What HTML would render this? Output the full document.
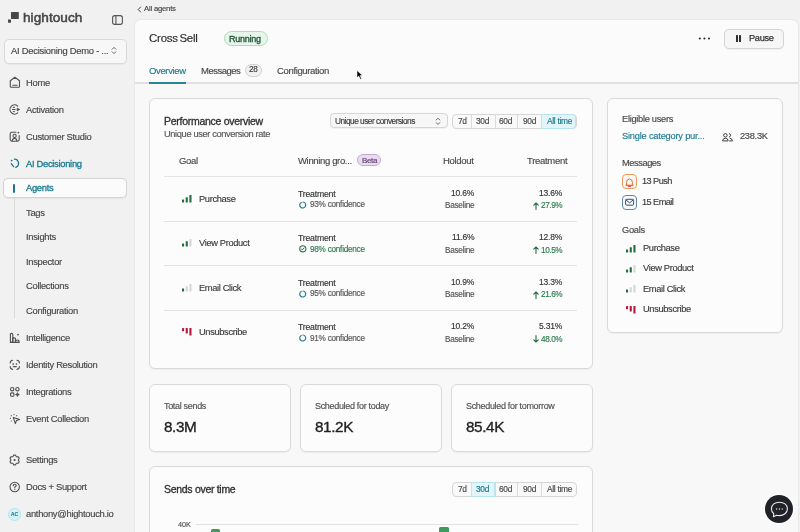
<!DOCTYPE html>
<html><head><meta charset="utf-8">
<style>
*{box-sizing:border-box;margin:0;padding:0}
html,body{width:800px;height:532px;overflow:hidden}
body{background:#f1f1f1;font-family:"Liberation Sans",sans-serif;color:#2b2b2b;position:relative}
.a{position:absolute;white-space:nowrap;line-height:1;-webkit-text-stroke-width:0.15px}
body>div,body>svg{will-change:transform}
svg{position:absolute;overflow:visible}
.panel{position:absolute;left:133.6px;top:19px;width:664.6px;height:520px;background:#fbfbfb;border-radius:7px 7px 0 0;border:1px solid #e9e9e9;border-bottom:none;overflow:hidden}
.content{position:absolute;left:0;top:62.2px;width:664px;height:460px;background:#f8f8f8;border-top:2px solid #e1e1e1}
</style></head>
<body>
<svg style="left:8px;top:12px" width="11" height="11" viewBox="0 0 11 11"><rect x="3" y="0" width="7.8" height="7.1" rx="0.5" fill="#474747"/><rect x="0" y="7.4" width="3" height="3.3" rx="0.4" fill="#474747"/></svg>
<div class="a" style="left:22.80px;top:11.29px;font-size:13.6px;color:#444;letter-spacing:0.05px;font-weight:normal;-webkit-text-stroke-width:0.5px">hightouch</div>
<svg style="left:112px;top:14.5px" width="11" height="10" viewBox="0 0 11 10"><rect x="0.6" y="0.6" width="9.8" height="8.8" rx="2.2" fill="none" stroke="#555" stroke-width="1.1"/><line x1="3.9" y1="1" x2="3.9" y2="9" stroke="#555" stroke-width="1.1"/></svg>
<div class="a" style="left:3.5px;top:38.5px;width:123px;height:24.5px;border:1px solid #d9d9d9;border-radius:5px;background:#f7f7f7;box-shadow:0 0.5px 1px rgba(0,0,0,0.04)"></div>
<div class="a" style="left:11.00px;top:46.24px;font-size:9.4px;color:#454545;letter-spacing:-0.25px;font-weight:normal;">AI Decisioning Demo - ...</div>
<svg style="left:111px;top:46px" width="6" height="9" viewBox="0 0 6 9"><path d="M1.2 3.2 L3 1.4 L4.8 3.2 M1.2 5.8 L3 7.6 L4.8 5.8" fill="none" stroke="#555" stroke-width="0.9" stroke-linecap="round" stroke-linejoin="round"/></svg>
<div class="a" style="left:26.00px;top:78.14px;font-size:9.4px;color:#474747;letter-spacing:-0.3px;font-weight:normal;">Home</div>
<div class="a" style="left:26.00px;top:104.94px;font-size:9.4px;color:#474747;letter-spacing:-0.3px;font-weight:normal;">Activation</div>
<div class="a" style="left:26.00px;top:131.94px;font-size:9.4px;color:#474747;letter-spacing:-0.3px;font-weight:normal;">Customer Studio</div>
<div class="a" style="left:26.00px;top:333.24px;font-size:9.4px;color:#474747;letter-spacing:-0.3px;font-weight:normal;">Intelligence</div>
<div class="a" style="left:26.00px;top:360.14px;font-size:9.4px;color:#474747;letter-spacing:-0.3px;font-weight:normal;">Identity Resolution</div>
<div class="a" style="left:26.00px;top:387.04px;font-size:9.4px;color:#474747;letter-spacing:-0.3px;font-weight:normal;">Integrations</div>
<div class="a" style="left:26.00px;top:413.74px;font-size:9.4px;color:#474747;letter-spacing:-0.3px;font-weight:normal;">Event Collection</div>
<div class="a" style="left:26.00px;top:455.44px;font-size:9.4px;color:#474747;letter-spacing:-0.3px;font-weight:normal;">Settings</div>
<div class="a" style="left:26.00px;top:482.14px;font-size:9.4px;color:#474747;letter-spacing:-0.3px;font-weight:normal;">Docs + Support</div>
<div class="a" style="left:26.00px;top:508.94px;font-size:9.4px;color:#474747;letter-spacing:-0.3px;font-weight:normal;">anthony@hightouch.io</div>
<div class="a" style="left:26.00px;top:158.94px;font-size:9.4px;color:#187a8f;letter-spacing:-0.3px;font-weight:normal;-webkit-text-stroke-width:0.3px">AI Decisioning</div>
<div class="a" style="left:3.2px;top:178.1px;width:124px;height:19.6px;border:1px solid #d4d4d4;border-radius:5px;background:#fbfbfb;box-shadow:0 0.5px 1px rgba(0,0,0,0.05)"></div>
<div class="a" style="left:13px;top:184px;width:1.8px;height:9px;background:#1e7386;border-radius:1px"></div>
<div class="a" style="left:26.00px;top:183.14px;font-size:9.4px;color:#187a8f;letter-spacing:-0.3px;font-weight:normal;-webkit-text-stroke-width:0.3px">Agents</div>
<div class="a" style="left:13.6px;top:198px;width:1px;height:120px;background:#d9d9d9"></div>
<div class="a" style="left:26.00px;top:208.14px;font-size:9.4px;color:#474747;letter-spacing:-0.3px;font-weight:normal;">Tags</div>
<div class="a" style="left:26.00px;top:232.34px;font-size:9.4px;color:#474747;letter-spacing:-0.3px;font-weight:normal;">Insights</div>
<div class="a" style="left:26.00px;top:256.84px;font-size:9.4px;color:#474747;letter-spacing:-0.3px;font-weight:normal;">Inspector</div>
<div class="a" style="left:26.00px;top:281.34px;font-size:9.4px;color:#474747;letter-spacing:-0.3px;font-weight:normal;">Collections</div>
<div class="a" style="left:26.00px;top:305.84px;font-size:9.4px;color:#474747;letter-spacing:-0.3px;font-weight:normal;">Configuration</div>
<svg style="left:9px;top:76px" width="12" height="12" viewBox="0 0 12 12"><path d="M1.3 4.8 L5.9 1.2 L10.5 4.8 L10.5 10.4 Q10.5 11.2 9.7 11.2 L2.1 11.2 Q1.3 11.2 1.3 10.4 Z" fill="none" stroke="#505050" stroke-width="1.1" stroke-linecap="round" stroke-linejoin="round"/><path d="M3.8 9.2 L8 9.2" fill="none" stroke="#505050" stroke-width="1.1" stroke-linecap="round" stroke-linejoin="round"/></svg>
<svg style="left:9px;top:104px" width="12" height="12" viewBox="0 0 12 12"><path d="M8.7 2.1 A4.6 4.6 0 1 0 8.7 8.9" fill="none" stroke="#505050" stroke-width="1.1" stroke-linecap="round" stroke-linejoin="round"/><path d="M4.3 3.4 L5.5 3.4 M3.4 5.5 L6.2 5.5 M4.3 7.6 L5.5 7.6" fill="none" stroke="#505050" stroke-width="1" stroke-linecap="round"/><path d="M8.2 4.2 L10.6 5.5 L8.2 6.8 Z" fill="#505050" stroke="#505050" stroke-width="0.9" stroke-linejoin="round"/></svg>
<svg style="left:9px;top:131px" width="12" height="12" viewBox="0 0 12 12"><path d="M7 1.2 L2.8 1.2 Q1.2 1.2 1.2 2.8 L1.2 8.6 Q1.2 10.2 2.8 10.2 L8.6 10.2 Q10.2 10.2 10.2 8.6 L10.2 4.6" fill="none" stroke="#505050" stroke-width="1.1" stroke-linecap="round" stroke-linejoin="round"/><circle cx="5.6" cy="4.9" r="1.6" fill="none" stroke="#505050" stroke-width="1.1" stroke-linecap="round" stroke-linejoin="round"/><path d="M3.2 10 Q3.6 7.4 5.6 7.4 Q7.6 7.4 8 10" fill="none" stroke="#505050" stroke-width="1.1" stroke-linecap="round" stroke-linejoin="round"/><circle cx="9.4" cy="1.6" r="0.9" fill="#505050"/></svg>
<svg style="left:9px;top:157px" width="12" height="12" viewBox="0 0 12 12"><circle cx="2.6" cy="3.6" r="0.9" fill="#1e7386"/><path d="M5.4 2.1 A4.3 4.3 0 0 1 6.8 10.4" fill="none" stroke="#1e7386" stroke-width="1.3" stroke-linecap="round"/><path d="M2.3 6.6 L4.6 9.6" fill="none" stroke="#1e7386" stroke-width="1.3" stroke-linecap="round"/></svg>
<svg style="left:9px;top:332px" width="12" height="12" viewBox="0 0 12 12"><path d="M1.4 10.4 L1.4 2.6 Q1.4 1.4 2.6 1.4 Q3.8 1.4 3.8 2.6 L3.8 10.4 Z" fill="none" stroke="#505050" stroke-width="1.1" stroke-linecap="round" stroke-linejoin="round"/><path d="M3.8 10.4 L3.8 5.6 Q6.4 5.6 6.4 6.8 L6.4 10.4" fill="none" stroke="#505050" stroke-width="1.1" stroke-linecap="round" stroke-linejoin="round"/><path d="M6.4 10.4 L10 10.4 Q10.4 8 8.6 8 Q7.2 8 6.4 8.8" fill="none" stroke="#505050" stroke-width="1.1" stroke-linecap="round" stroke-linejoin="round"/><path d="M1.4 10.4 L10 10.4" fill="none" stroke="#505050" stroke-width="1.1" stroke-linecap="round" stroke-linejoin="round"/><circle cx="9" cy="2.6" r="0.9" fill="#505050"/></svg>
<svg style="left:9px;top:359px" width="12" height="12" viewBox="0 0 12 12"><path d="M1.2 4 Q1.2 1.4 3.6 1.2 M8 1.2 Q10.4 1.4 10.4 4 M10.4 7.6 Q10.4 10.2 8 10.4 M3.6 10.4 Q1.2 10.2 1.2 7.6" fill="none" stroke="#505050" stroke-width="1.1" stroke-linecap="round" stroke-linejoin="round"/><circle cx="4.2" cy="5" r="0.55" fill="#505050" stroke="#505050" stroke-width="0.6"/><circle cx="7.4" cy="5" r="0.55" fill="#505050" stroke="#505050" stroke-width="0.6"/><path d="M4.3 7.6 L7.3 7.6" fill="none" stroke="#505050" stroke-width="1.1" stroke-linecap="round" stroke-linejoin="round"/></svg>
<svg style="left:9px;top:386px" width="12" height="12" viewBox="0 0 12 12"><circle cx="3.2" cy="3.2" r="1.7" fill="none" stroke="#505050" stroke-width="1.1" stroke-linecap="round" stroke-linejoin="round"/><circle cx="8.4" cy="3.2" r="1.7" fill="none" stroke="#505050" stroke-width="1.1" stroke-linecap="round" stroke-linejoin="round"/><rect x="1.5" y="6.9" width="3.4" height="3.4" rx="1" fill="none" stroke="#505050" stroke-width="1.1" stroke-linecap="round" stroke-linejoin="round"/><path d="M8.4 6.5 Q8.8 8.2 10.5 8.6 Q8.8 9 8.4 10.7 Q8 9 6.3 8.6 Q8 8.2 8.4 6.5 Z" fill="#505050" stroke="#505050" stroke-width="0.5" stroke-linejoin="round"/></svg>
<svg style="left:9px;top:413px" width="12" height="12" viewBox="0 0 12 12"><circle cx="5" cy="1.6" r="0.6" fill="#505050"/><circle cx="2.3" cy="2.7" r="0.6" fill="#505050"/><circle cx="7.7" cy="2.7" r="0.6" fill="#505050"/><circle cx="1.4" cy="5.3" r="0.6" fill="#505050"/><circle cx="2.3" cy="8" r="0.6" fill="#505050"/><path d="M4.3 4.6 L10.6 6.6 L7.4 7.6 L6.4 10.6 Z" fill="none" stroke="#505050" stroke-width="1.1" stroke-linecap="round" stroke-linejoin="round"/></svg>
<svg style="left:9px;top:454px" width="12" height="12" viewBox="0 0 12 12"><path d="M3.75 2.80 L4.75 1.17 L6.45 1.17 L7.45 2.80 L9.35 2.85 L10.20 4.32 L9.30 6.00 L10.20 7.68 L9.35 9.15 L7.45 9.20 L6.45 10.83 L4.75 10.83 L3.75 9.20 L1.85 9.15 L1.00 7.68 L1.90 6.00 L1.00 4.32 L1.85 2.85 Z" fill="none" stroke="#505050" stroke-width="1.1" stroke-linecap="round" stroke-linejoin="round"/><circle cx="5.6" cy="6" r="1.1" fill="#505050"/></svg>
<svg style="left:9px;top:481px" width="12" height="12" viewBox="0 0 12 12"><circle cx="5.7" cy="6" r="4.7" fill="none" stroke="#505050" stroke-width="1.1" stroke-linecap="round" stroke-linejoin="round"/><path d="M4.2 4.7 Q4.2 3.2 5.7 3.2 Q7.2 3.2 7.2 4.6 Q7.2 5.6 5.8 6.1 L5.8 7" fill="none" stroke="#505050" stroke-width="1.1" stroke-linecap="round" stroke-linejoin="round"/><circle cx="5.8" cy="8.6" r="0.6" fill="#505050"/></svg>
<div class="a" style="left:7.9px;top:507.9px;width:12.8px;height:12.8px;border-radius:50%;background:#d5f2f9;border:0.8px solid #b3e3ee;display:flex;align-items:center;justify-content:center;font-size:5.4px;font-weight:bold;color:#1e6f80;letter-spacing:-0.2px;-webkit-text-stroke-width:0;line-height:1;padding-top:0.4px">AC</div>
<svg style="left:137px;top:5.5px" width="5" height="7" viewBox="0 0 5 7"><path d="M3.6 1 L1.2 3.5 L3.6 6" fill="none" stroke="#444" stroke-width="1" stroke-linecap="round" stroke-linejoin="round"/></svg>
<div class="a" style="left:144.10px;top:5.48px;font-size:7.7px;color:#444;letter-spacing:-0.2px;font-weight:normal;">All agents</div>
<div class="panel"><div class="content"></div></div>
<div class="a" style="left:149.00px;top:32.87px;font-size:11.5px;color:#2b2b2b;letter-spacing:-0.25px;font-weight:normal;word-spacing:-1.3px">Cross Sell</div>
<div class="a" style="left:224px;top:31.2px;width:44px;height:14.6px;border:1px solid #a9dcb8;border-radius:8px;background:#e7f5eb"></div>
<div class="a" style="left:228.50px;top:34.68px;font-size:9px;color:#1f5134;letter-spacing:-0.25px;font-weight:normal;-webkit-text-stroke:0.3px #1f5134">Running</div>
<svg style="left:698px;top:37px" width="13" height="3" viewBox="0 0 13 3"><circle cx="1.8" cy="1.5" r="1" fill="#222"/><circle cx="6.4" cy="1.5" r="1" fill="#222"/><circle cx="11" cy="1.5" r="1" fill="#222"/></svg>
<div class="a" style="left:724px;top:28.7px;width:60px;height:19.8px;border:1px solid #d4d4d4;border-radius:5px;background:#f6f6f6;box-shadow:0 0.5px 1px rgba(0,0,0,0.05)"></div>
<div class="a" style="left:735.5px;top:35px;width:1.7px;height:7.1px;background:#2e2e2e;border-radius:0.6px"></div>
<div class="a" style="left:739.4px;top:35px;width:1.7px;height:7.1px;background:#2e2e2e;border-radius:0.6px"></div>
<div class="a" style="left:749.30px;top:34.31px;font-size:9.2px;color:#333;letter-spacing:-0.3px;font-weight:normal;-webkit-text-stroke:0.25px #333">Pause</div>
<div class="a" style="left:148.80px;top:65.96px;font-size:9.5px;color:#187a8f;letter-spacing:-0.35px;font-weight:normal;">Overview</div>
<div class="a" style="left:149px;top:82px;width:37px;height:1.6px;background:#2a8599"></div>
<div class="a" style="left:201.00px;top:65.96px;font-size:9.5px;color:#474747;letter-spacing:-0.5px;font-weight:normal;">Messages</div>
<div class="a" style="left:245px;top:64px;width:17px;height:12.6px;border:1px solid #cfcfcf;border-radius:7px;background:#f1f1f1"></div>
<div class="a" style="left:249.00px;top:66.26px;font-size:8.2px;color:#3a3a3a;letter-spacing:-0.3px;font-weight:normal;">28</div>
<div class="a" style="left:277.00px;top:65.96px;font-size:9.5px;color:#474747;letter-spacing:-0.35px;font-weight:normal;">Configuration</div>
<div class="a" style="left:149px;top:98.4px;width:443.6px;height:270.6px;background:#fcfcfc;border:1px solid #d9d9d9;border-radius:6px;box-shadow:0 1px 1px rgba(0,0,0,0.05)"></div>
<div class="a" style="left:607.2px;top:98.4px;width:176.3px;height:234.8px;background:#fcfcfc;border:1px solid #d9d9d9;border-radius:6px;box-shadow:0 1px 1px rgba(0,0,0,0.05)"></div>
<div class="a" style="left:149px;top:384px;width:141.5px;height:67.5px;background:#fcfcfc;border:1px solid #d9d9d9;border-radius:6px;box-shadow:0 1px 1px rgba(0,0,0,0.05)"></div>
<div class="a" style="left:300px;top:384px;width:141.5px;height:67.5px;background:#fcfcfc;border:1px solid #d9d9d9;border-radius:6px;box-shadow:0 1px 1px rgba(0,0,0,0.05)"></div>
<div class="a" style="left:451.3px;top:384px;width:141.5px;height:67.5px;background:#fcfcfc;border:1px solid #d9d9d9;border-radius:6px;box-shadow:0 1px 1px rgba(0,0,0,0.05)"></div>
<div class="a" style="left:149px;top:466.4px;width:444px;height:80px;background:#fcfcfc;border:1px solid #d9d9d9;border-radius:6px;box-shadow:0 1px 1px rgba(0,0,0,0.05)"></div>
<div class="a" style="left:164.20px;top:116.11px;font-size:10.5px;color:#2e2e2e;letter-spacing:-0.28px;font-weight:normal;-webkit-text-stroke:0.3px #2e2e2e">Performance overview</div>
<div class="a" style="left:164.40px;top:129.53px;font-size:9.3px;color:#555;letter-spacing:-0.38px;font-weight:normal;">Unique user conversion rate</div>
<div class="a" style="left:329.6px;top:113.4px;width:117.6px;height:14.8px;border:1px solid #d6d6d6;border-radius:4px;background:#f7f7f7;box-shadow:0 0.5px 1px rgba(0,0,0,0.05)"></div>
<div class="a" style="left:334.60px;top:116.97px;font-size:8.3px;color:#383838;letter-spacing:-0.5px;font-weight:normal;">Unique user conversions</div>
<svg style="left:434.5px;top:116.5px" width="6" height="9" viewBox="0 0 6 9"><path d="M1.2 3 L3 1.2 L4.8 3 M1.2 5.6 L3 7.4 L4.8 5.6" fill="none" stroke="#555" stroke-width="0.9" stroke-linecap="round" stroke-linejoin="round"/></svg>
<div class="a" style="left:452px;top:113.6px;width:124.6px;height:14.5px;border:1px solid #d6d6d6;border-radius:4px;background:#f9f9f9"></div>
<div class="a" style="left:541.25px;top:113.6px;width:35.35000000000002px;height:14.5px;background:#e2f5fa;border:1px solid #b7e3ee;border-radius:0 4px 4px 0"></div>
<div class="a" style="left:470.7px;top:114.1px;width:1px;height:13.5px;background:#dadada"></div>
<div class="a" style="left:494.5px;top:114.1px;width:1px;height:13.5px;background:#dadada"></div>
<div class="a" style="left:517.3px;top:114.1px;width:1px;height:13.5px;background:#dadada"></div>
<div class="a" style="left:541.25px;top:114.1px;width:1px;height:13.5px;background:#dadada"></div>
<div class="a" style="left:457.60px;top:116.89px;font-size:8.4px;color:#474747;letter-spacing:-0.3px;font-weight:normal;">7d</div>
<div class="a" style="left:476.00px;top:116.89px;font-size:8.4px;color:#474747;letter-spacing:-0.3px;font-weight:normal;">30d</div>
<div class="a" style="left:499.25px;top:116.89px;font-size:8.4px;color:#474747;letter-spacing:-0.3px;font-weight:normal;">60d</div>
<div class="a" style="left:522.90px;top:116.89px;font-size:8.4px;color:#474747;letter-spacing:-0.3px;font-weight:normal;">90d</div>
<div class="a" style="left:547.40px;top:116.89px;font-size:8.4px;color:#1e7386;letter-spacing:-0.3px;font-weight:normal;">All time</div>
<div class="a" style="left:179.00px;top:156.16px;font-size:9.5px;color:#474747;letter-spacing:-0.3px;font-weight:normal;">Goal</div>
<div class="a" style="left:298.00px;top:156.36px;font-size:9.5px;color:#474747;letter-spacing:-0.35px;font-weight:normal;">Winning gro...</div>
<div class="a" style="left:357.4px;top:154.4px;width:24.2px;height:12px;border:1px solid #caa6d8;border-radius:7px;background:#eadcf0"></div>
<div class="a" style="left:362.40px;top:156.83px;font-size:8px;color:#5a3a6a;letter-spacing:-0.35px;font-weight:normal;">Beta</div>
<div class="a" style="right:326.00px;top:156.16px;font-size:9.5px;color:#474747;letter-spacing:-0.3px;font-weight:normal;">Holdout</div>
<div class="a" style="right:233.00px;top:156.16px;font-size:9.5px;color:#474747;letter-spacing:-0.3px;font-weight:normal;">Treatment</div>
<div class="a" style="left:164.4px;top:176.4px;width:412.6px;height:1.2px;background:#e4e4e4"></div>
<svg style="left:182.2px;top:194.9px" width="10" height="8" viewBox="0 0 10 8"><rect x="0.0" y="4.3999999999999995" width="2.1" height="3.2" rx="0.4" fill="#1f6e3e"/><rect x="3.7" y="2.1999999999999993" width="2.1" height="5.4" rx="0.4" fill="#1f6e3e"/><rect x="7.4" y="0.0" width="2.1" height="7.6" rx="0.4" fill="#1f6e3e"/></svg>
<div class="a" style="left:198.80px;top:194.73px;font-size:9.3px;color:#3a3a3a;letter-spacing:-0.35px;font-weight:normal;">Purchase</div>
<div class="a" style="left:298.30px;top:189.84px;font-size:8.7px;color:#333;letter-spacing:-0.2px;font-weight:normal;">Treatment</div>
<svg style="left:298.5px;top:200.8px" width="8" height="8" viewBox="0 0 8 8"><path d="M2.2 1.4 A3 3 0 1 0 4 1" fill="none" stroke="#2b7f93" stroke-width="1.2" stroke-linecap="round"/></svg>
<div class="a" style="left:310.00px;top:201.26px;font-size:8.2px;color:#555;letter-spacing:-0.25px;font-weight:normal;">93% confidence</div>
<div class="a" style="right:326.00px;top:189.00px;font-size:8.5px;color:#333;letter-spacing:-0.2px;font-weight:normal;">10.6%</div>
<div class="a" style="right:326.00px;top:202.26px;font-size:8.2px;color:#555;letter-spacing:-0.25px;font-weight:normal;">Baseline</div>
<div class="a" style="right:238.00px;top:189.00px;font-size:8.5px;color:#333;letter-spacing:-0.2px;font-weight:normal;">13.6%</div>
<div class="a" style="right:237.80px;top:202.26px;font-size:8.2px;color:#2a7a4a;letter-spacing:-0.4px;font-weight:normal;">27.9%</div>
<svg style="left:532.5px;top:202.0px" width="6" height="8" viewBox="0 0 6 8"><path d="M3 7.4 L3 1 M0.8 3.2 L3 1 L5.2 3.2" fill="none" stroke="#1f6e3e" stroke-width="1.1" stroke-linecap="round" stroke-linejoin="round"/></svg>
<div class="a" style="left:164.4px;top:220.85000000000002px;width:412.6px;height:1.2px;background:#e4e4e4"></div>
<svg style="left:182.2px;top:239.35px" width="10" height="8" viewBox="0 0 10 8"><rect x="0.0" y="4.3999999999999995" width="2.1" height="3.2" rx="0.4" fill="#1f6e3e"/><rect x="3.7" y="2.1999999999999993" width="2.1" height="5.4" rx="0.4" fill="#1f6e3e"/><rect x="7.4" y="0.0" width="2.1" height="7.6" rx="0.4" fill="#d5d5d5"/></svg>
<div class="a" style="left:198.80px;top:239.18px;font-size:9.3px;color:#3a3a3a;letter-spacing:-0.35px;font-weight:normal;">View Product</div>
<div class="a" style="left:298.30px;top:234.29px;font-size:8.7px;color:#333;letter-spacing:-0.2px;font-weight:normal;">Treatment</div>
<svg style="left:298.5px;top:245.25px" width="8" height="8" viewBox="0 0 8 8"><circle cx="3.8" cy="3.8" r="3.1" fill="none" stroke="#2a7a4a" stroke-width="1.1"/><path d="M2.4 3.9 L3.4 4.9 L5.2 2.9" fill="none" stroke="#2a7a4a" stroke-width="1" stroke-linecap="round" stroke-linejoin="round"/></svg>
<div class="a" style="left:310.00px;top:245.71px;font-size:8.2px;color:#2a7a4a;letter-spacing:-0.25px;font-weight:normal;">98% confidence</div>
<div class="a" style="right:326.00px;top:233.45px;font-size:8.5px;color:#333;letter-spacing:-0.2px;font-weight:normal;">11.6%</div>
<div class="a" style="right:326.00px;top:246.71px;font-size:8.2px;color:#555;letter-spacing:-0.25px;font-weight:normal;">Baseline</div>
<div class="a" style="right:238.00px;top:233.45px;font-size:8.5px;color:#333;letter-spacing:-0.2px;font-weight:normal;">12.8%</div>
<div class="a" style="right:237.80px;top:246.71px;font-size:8.2px;color:#2a7a4a;letter-spacing:-0.4px;font-weight:normal;">10.5%</div>
<svg style="left:532.5px;top:246.45px" width="6" height="8" viewBox="0 0 6 8"><path d="M3 7.4 L3 1 M0.8 3.2 L3 1 L5.2 3.2" fill="none" stroke="#1f6e3e" stroke-width="1.1" stroke-linecap="round" stroke-linejoin="round"/></svg>
<div class="a" style="left:164.4px;top:265.3px;width:412.6px;height:1.2px;background:#e4e4e4"></div>
<svg style="left:182.2px;top:283.79999999999995px" width="10" height="8" viewBox="0 0 10 8"><rect x="0.0" y="4.3999999999999995" width="2.1" height="3.2" rx="0.4" fill="#1f6e3e"/><rect x="3.7" y="2.1999999999999993" width="2.1" height="5.4" rx="0.4" fill="#d5d5d5"/><rect x="7.4" y="0.0" width="2.1" height="7.6" rx="0.4" fill="#d5d5d5"/></svg>
<div class="a" style="left:198.80px;top:283.63px;font-size:9.3px;color:#3a3a3a;letter-spacing:-0.35px;font-weight:normal;">Email Click</div>
<div class="a" style="left:298.30px;top:278.74px;font-size:8.7px;color:#333;letter-spacing:-0.2px;font-weight:normal;">Treatment</div>
<svg style="left:298.5px;top:289.70000000000005px" width="8" height="8" viewBox="0 0 8 8"><path d="M2.2 1.4 A3 3 0 1 0 4 1" fill="none" stroke="#2b7f93" stroke-width="1.2" stroke-linecap="round"/></svg>
<div class="a" style="left:310.00px;top:290.16px;font-size:8.2px;color:#555;letter-spacing:-0.25px;font-weight:normal;">95% confidence</div>
<div class="a" style="right:326.00px;top:277.90px;font-size:8.5px;color:#333;letter-spacing:-0.2px;font-weight:normal;">10.9%</div>
<div class="a" style="right:326.00px;top:291.16px;font-size:8.2px;color:#555;letter-spacing:-0.25px;font-weight:normal;">Baseline</div>
<div class="a" style="right:238.00px;top:277.90px;font-size:8.5px;color:#333;letter-spacing:-0.2px;font-weight:normal;">13.3%</div>
<div class="a" style="right:237.80px;top:291.16px;font-size:8.2px;color:#2a7a4a;letter-spacing:-0.4px;font-weight:normal;">21.6%</div>
<svg style="left:532.5px;top:290.9px" width="6" height="8" viewBox="0 0 6 8"><path d="M3 7.4 L3 1 M0.8 3.2 L3 1 L5.2 3.2" fill="none" stroke="#1f6e3e" stroke-width="1.1" stroke-linecap="round" stroke-linejoin="round"/></svg>
<div class="a" style="left:164.4px;top:309.75px;width:412.6px;height:1.2px;background:#e4e4e4"></div>
<svg style="left:182px;top:327.7px" width="10" height="8" viewBox="0 0 10 8"><rect x="0.0" y="0" width="2.1" height="3.2" rx="0.4" fill="#b3173d"/><rect x="3.7" y="0" width="2.1" height="5.4" rx="0.4" fill="#b3173d"/><rect x="7.4" y="0" width="2.1" height="7.6" rx="0.4" fill="#b3173d"/></svg>
<div class="a" style="left:198.80px;top:328.08px;font-size:9.3px;color:#3a3a3a;letter-spacing:-0.35px;font-weight:normal;">Unsubscribe</div>
<div class="a" style="left:298.30px;top:323.19px;font-size:8.7px;color:#333;letter-spacing:-0.2px;font-weight:normal;">Treatment</div>
<svg style="left:298.5px;top:334.15000000000003px" width="8" height="8" viewBox="0 0 8 8"><path d="M2.2 1.4 A3 3 0 1 0 4 1" fill="none" stroke="#2b7f93" stroke-width="1.2" stroke-linecap="round"/></svg>
<div class="a" style="left:310.00px;top:334.61px;font-size:8.2px;color:#555;letter-spacing:-0.25px;font-weight:normal;">91% confidence</div>
<div class="a" style="right:326.00px;top:322.35px;font-size:8.5px;color:#333;letter-spacing:-0.2px;font-weight:normal;">10.2%</div>
<div class="a" style="right:326.00px;top:335.61px;font-size:8.2px;color:#555;letter-spacing:-0.25px;font-weight:normal;">Baseline</div>
<div class="a" style="right:238.00px;top:322.35px;font-size:8.5px;color:#333;letter-spacing:-0.2px;font-weight:normal;">5.31%</div>
<div class="a" style="right:237.80px;top:335.61px;font-size:8.2px;color:#2a7a4a;letter-spacing:-0.4px;font-weight:normal;">48.0%</div>
<svg style="left:532.5px;top:335.35px" width="6" height="8" viewBox="0 0 6 8"><path d="M3 0.6 L3 7 M0.8 4.8 L3 7 L5.2 4.8" fill="none" stroke="#1f6e3e" stroke-width="1.1" stroke-linecap="round" stroke-linejoin="round"/></svg>
<div class="a" style="left:621.60px;top:114.93px;font-size:9.3px;color:#474747;letter-spacing:-0.3px;font-weight:normal;">Eligible users</div>
<div class="a" style="left:621.60px;top:131.73px;font-size:9.3px;color:#1f7a90;letter-spacing:-0.22px;font-weight:normal;">Single category pur...</div>
<svg style="left:722px;top:132.5px" width="12" height="9" viewBox="0 0 12 9"><circle cx="3.4" cy="2.3" r="1.75" fill="none" stroke="#3d3d3d" stroke-width="1"/><path d="M0.6 7.9 Q0.8 5.2 3.4 5.2 Q6 5.2 6.2 7.9 Z" fill="none" stroke="#3d3d3d" stroke-width="1" stroke-linejoin="round"/><path d="M7.3 0.6 A1.75 1.75 0 0 1 7.3 4" fill="none" stroke="#3d3d3d" stroke-width="1" stroke-linecap="round"/><path d="M8.1 5.3 Q10.3 5.6 10.4 7.9 L7.6 7.9" fill="none" stroke="#3d3d3d" stroke-width="1" stroke-linecap="round" stroke-linejoin="round"/></svg>
<div class="a" style="right:32.10px;top:131.53px;font-size:9.3px;color:#474747;letter-spacing:-0.3px;font-weight:normal;">238.3K</div>
<div class="a" style="left:621.60px;top:159.13px;font-size:9.3px;color:#474747;letter-spacing:-0.45px;font-weight:normal;">Messages</div>
<div class="a" style="left:622.2px;top:174.3px;width:14.8px;height:15px;border:1px solid #e59a5e;border-radius:4px;background:#fdf6f1"></div>
<svg style="left:624px;top:176.5px" width="11" height="11" viewBox="0 0 11 11"><path d="M2.6 8.2 L2.6 5.4 Q2.6 2 5.5 2 Q8.4 2 8.4 5.4 L8.4 8.2 Z M1.8 8.2 L9.2 8.2" fill="none" stroke="#dd6f3a" stroke-width="1" stroke-linejoin="round" stroke-linecap="round"/><path d="M4.5 9.4 L6.5 9.4" fill="none" stroke="#c8403a" stroke-width="1" stroke-linecap="round"/></svg>
<div class="a" style="left:641.80px;top:177.41px;font-size:9.2px;color:#3a3a3a;letter-spacing:-0.55px;font-weight:normal;">13 Push</div>
<div class="a" style="left:622.2px;top:194.5px;width:14.8px;height:15px;border:1px solid #6585a6;border-radius:4px;background:#f6f8fb"></div>
<svg style="left:624px;top:196.5px" width="11" height="11" viewBox="0 0 11 11"><rect x="1.6" y="2.3" width="8" height="5.9" rx="1.1" fill="none" stroke="#34506e" stroke-width="1"/><path d="M2 3 L5.6 5.8 L9.2 3" fill="none" stroke="#34506e" stroke-width="1" stroke-linejoin="round" stroke-linecap="round"/></svg>
<div class="a" style="left:641.80px;top:197.51px;font-size:9.2px;color:#3a3a3a;letter-spacing:-0.55px;font-weight:normal;">15 Email</div>
<div class="a" style="left:621.80px;top:225.93px;font-size:9.3px;color:#474747;letter-spacing:-0.3px;font-weight:normal;">Goals</div>
<svg style="left:625.75px;top:244.6px" width="10" height="8" viewBox="0 0 10 8"><rect x="0.0" y="4.3999999999999995" width="2.1" height="3.2" rx="0.4" fill="#1f6e3e"/><rect x="3.7" y="2.1999999999999993" width="2.1" height="5.4" rx="0.4" fill="#1f6e3e"/><rect x="7.4" y="0.0" width="2.1" height="7.6" rx="0.4" fill="#1f6e3e"/></svg>
<div class="a" style="left:642.60px;top:243.93px;font-size:9.3px;color:#3a3a3a;letter-spacing:-0.35px;font-weight:normal;">Purchase</div>
<svg style="left:625.75px;top:264.9px" width="10" height="8" viewBox="0 0 10 8"><rect x="0.0" y="4.3999999999999995" width="2.1" height="3.2" rx="0.4" fill="#1f6e3e"/><rect x="3.7" y="2.1999999999999993" width="2.1" height="5.4" rx="0.4" fill="#1f6e3e"/><rect x="7.4" y="0.0" width="2.1" height="7.6" rx="0.4" fill="#d5d5d5"/></svg>
<div class="a" style="left:642.60px;top:264.23px;font-size:9.3px;color:#3a3a3a;letter-spacing:-0.35px;font-weight:normal;">View Product</div>
<svg style="left:625.75px;top:285.2px" width="10" height="8" viewBox="0 0 10 8"><rect x="0.0" y="4.3999999999999995" width="2.1" height="3.2" rx="0.4" fill="#1f6e3e"/><rect x="3.7" y="2.1999999999999993" width="2.1" height="5.4" rx="0.4" fill="#d5d5d5"/><rect x="7.4" y="0.0" width="2.1" height="7.6" rx="0.4" fill="#d5d5d5"/></svg>
<div class="a" style="left:642.60px;top:284.53px;font-size:9.3px;color:#3a3a3a;letter-spacing:-0.35px;font-weight:normal;">Email Click</div>
<svg style="left:625.75px;top:305.7px" width="10" height="8" viewBox="0 0 10 8"><rect x="0.0" y="0" width="2.1" height="3.2" rx="0.4" fill="#b3173d"/><rect x="3.7" y="0" width="2.1" height="5.4" rx="0.4" fill="#b3173d"/><rect x="7.4" y="0" width="2.1" height="7.6" rx="0.4" fill="#b3173d"/></svg>
<div class="a" style="left:642.60px;top:304.93px;font-size:9.3px;color:#3a3a3a;letter-spacing:-0.35px;font-weight:normal;">Unsubscribe</div>
<div class="a" style="left:163.80px;top:402.18px;font-size:9px;color:#505050;letter-spacing:-0.32px;font-weight:normal;">Total sends</div>
<div class="a" style="left:164.00px;top:418.85px;font-size:15.3px;color:#222;letter-spacing:-0.4px;font-weight:normal;-webkit-text-stroke-width:0.35px">8.3M</div>
<div class="a" style="left:314.60px;top:402.18px;font-size:9px;color:#505050;letter-spacing:-0.32px;font-weight:normal;">Scheduled for today</div>
<div class="a" style="left:314.80px;top:418.85px;font-size:15.3px;color:#222;letter-spacing:-0.4px;font-weight:normal;-webkit-text-stroke-width:0.35px">81.2K</div>
<div class="a" style="left:466.00px;top:402.18px;font-size:9px;color:#505050;letter-spacing:-0.32px;font-weight:normal;">Scheduled for tomorrow</div>
<div class="a" style="left:466.20px;top:418.85px;font-size:15.3px;color:#222;letter-spacing:-0.4px;font-weight:normal;-webkit-text-stroke-width:0.35px">85.4K</div>
<div class="a" style="left:164.20px;top:484.01px;font-size:10.5px;color:#2e2e2e;letter-spacing:-0.3px;font-weight:normal;-webkit-text-stroke:0.3px #2e2e2e">Sends over time</div>
<div class="a" style="left:452px;top:481.75px;width:124.6px;height:14.5px;border:1px solid #d6d6d6;border-radius:4px;background:#f9f9f9"></div>
<div class="a" style="left:470.7px;top:481.75px;width:23.80000000000001px;height:14.5px;background:#e2f5fa;border:1px solid #b7e3ee;border-radius:0"></div>
<div class="a" style="left:470.7px;top:482.25px;width:1px;height:13.5px;background:#dadada"></div>
<div class="a" style="left:494.5px;top:482.25px;width:1px;height:13.5px;background:#dadada"></div>
<div class="a" style="left:517.3px;top:482.25px;width:1px;height:13.5px;background:#dadada"></div>
<div class="a" style="left:541.25px;top:482.25px;width:1px;height:13.5px;background:#dadada"></div>
<div class="a" style="left:457.60px;top:485.04px;font-size:8.4px;color:#474747;letter-spacing:-0.3px;font-weight:normal;">7d</div>
<div class="a" style="left:476.00px;top:485.04px;font-size:8.4px;color:#1e7386;letter-spacing:-0.3px;font-weight:normal;">30d</div>
<div class="a" style="left:499.25px;top:485.04px;font-size:8.4px;color:#474747;letter-spacing:-0.3px;font-weight:normal;">60d</div>
<div class="a" style="left:522.90px;top:485.04px;font-size:8.4px;color:#474747;letter-spacing:-0.3px;font-weight:normal;">90d</div>
<div class="a" style="left:547.40px;top:485.04px;font-size:8.4px;color:#474747;letter-spacing:-0.3px;font-weight:normal;">All time</div>
<div class="a" style="right:609.00px;top:521.22px;font-size:7.3px;color:#555;letter-spacing:-0.1px;font-weight:normal;">40K</div>
<div class="a" style="left:196px;top:523.9px;width:381.5px;height:0.8px;background:#e2e2e2"></div>
<div class="a" style="left:210.6px;top:529.4px;width:8.8px;height:10px;background:#3f9a5e;border-radius:1.5px"></div>
<div class="a" style="left:438.75px;top:527px;width:9.5px;height:10px;background:#3f9a5e;border-radius:1.5px"></div>
<svg style="left:355px;top:69px" width="10" height="12" viewBox="0 0 10 12"><path d="M2 1.6 L2 8.6 L3.8 7 L5.3 10.2 L6.5 9.7 L5.1 6.6 L7.5 6.5 Z" fill="#000" stroke="#fff" stroke-width="0.5" stroke-linejoin="round"/></svg>
<div class="a" style="left:765.4px;top:494.7px;width:27.8px;height:27.8px;border-radius:50%;background:#202228;box-shadow:0 0 0 1px #fff"></div>
<svg style="left:770px;top:499.5px" width="19" height="19" viewBox="0 0 19 19"><path d="M9.4 2.2 C13.8 2.2 17.4 4.6 17.4 8.8 C17.4 13 13.8 15.6 9.4 15.6 C8.4 15.6 7.4 15.4 6.6 15.2 L3.4 16.8 L3.8 13.8 C2.2 12.6 1.4 10.8 1.4 8.8 C1.4 4.6 5 2.2 9.4 2.2 Z" fill="none" stroke="#e8e8ee" stroke-width="1.1" stroke-linejoin="round"/><circle cx="6.6" cy="9" r="0.7" fill="#ddd"/><circle cx="9.4" cy="9" r="0.7" fill="#ddd"/><circle cx="12.2" cy="9" r="0.7" fill="#ddd"/></svg>
</body></html>
